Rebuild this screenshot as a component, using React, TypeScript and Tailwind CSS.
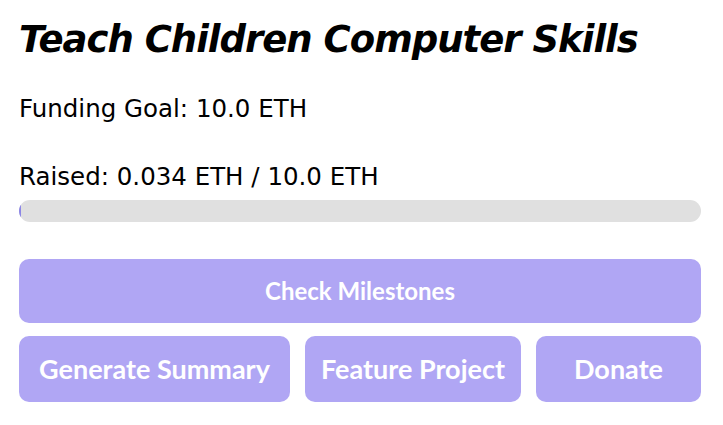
import React from 'react';

const App = () => {
  const raised = 0.034;
  const goal = 10.0;
  const pct = (raised / goal) * 100;

  return (
    <div className="min-h-screen bg-white text-black pl-[19px] pr-[22px] pt-[18px] font-['DejaVu_Sans',sans-serif]">
      {/* Title */}
      <h1 className="text-[37px] leading-[44px] font-bold italic tracking-[-1px] whitespace-nowrap">
        Teach Children Computer Skills
      </h1>

      {/* Funding info */}
      <p className="mt-[33px] text-[24.5px] leading-[28px]">Funding Goal: {goal.toFixed(1)} ETH</p>
      <p className="mt-[40px] text-[24.5px] leading-[28px]">
        Raised: {raised} ETH / {goal.toFixed(1)} ETH
      </p>

      {/* Progress bar */}
      <div className="mt-[9px] h-[22px] w-full rounded-full bg-[#e0e0e0] overflow-hidden">
        <div className="h-full bg-[#8c86e6] rounded-full" style={{ width: `${pct}%` }} />
      </div>

      {/* Actions */}
      <div className="mt-[37px] flex flex-col gap-[13px] font-['Lato',sans-serif]">
        <button className="h-[64px] w-full rounded-[10px] bg-[#b0a6f4] text-white text-[24px] font-bold">
          Check Milestones
        </button>
        <div className="flex gap-[15px]">
          <button className="h-[66px] w-[271px] rounded-[10px] bg-[#b0a6f4] text-white text-[27px] font-bold">
            Generate Summary
          </button>
          <button className="h-[66px] w-[216px] rounded-[10px] bg-[#b0a6f4] text-white text-[27px] font-bold">
            Feature Project
          </button>
          <button className="h-[66px] flex-1 rounded-[10px] bg-[#b0a6f4] text-white text-[27px] font-bold">
            Donate
          </button>
        </div>
      </div>
    </div>
  );
};

export default App;
